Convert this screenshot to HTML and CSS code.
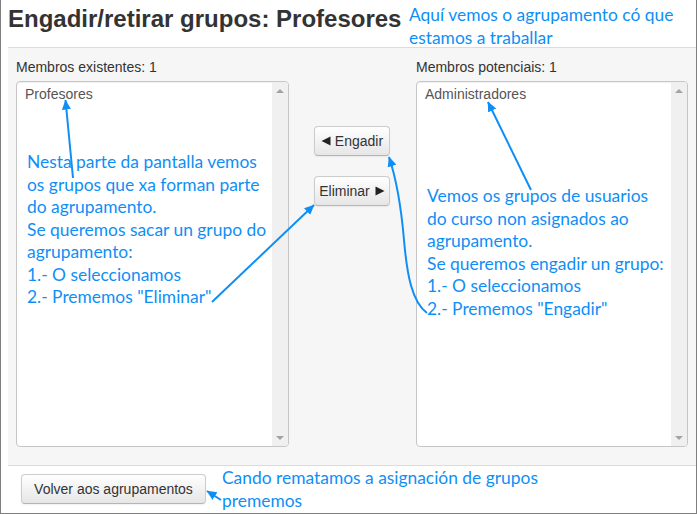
FILE: index.html
```html
<!DOCTYPE html>
<html>
<head>
<meta charset="utf-8">
<link rel="stylesheet" href="styles.css">
</head>
<body>
<div class="frame">
  <header class="head">
    <h2 class="title">Engadir/retirar grupos: Profesores</h2>
  </header>
  <div class="panel">
    <div class="col col-left">
      <div class="lbl">Membros existentes: 1</div>
      <div class="listbox">
        <div class="opts"><div class="opt">Profesores</div></div>
        <div class="sb"><span class="arr up"></span><span class="arr down"></span></div>
      </div>
    </div>
    <div class="mid">
      <button class="btn move"><svg class="tri tri-l" width="10" height="10" viewBox="0 0 10 10"><path d="M0.5,5 L9.5,0.5 L9.5,9.5 Z" fill="#222"/></svg>Engadir</button>
      <button class="btn move">Eliminar<svg class="tri tri-r" width="10" height="10" viewBox="0 0 10 10"><path d="M9.5,5 L0.5,0.5 L0.5,9.5 Z" fill="#222"/></svg></button>
    </div>
    <div class="col col-right">
      <div class="lbl">Membros potenciais: 1</div>
      <div class="listbox">
        <div class="opts"><div class="opt">Administradores</div></div>
        <div class="sb"><span class="arr up"></span><span class="arr down"></span></div>
      </div>
    </div>
  </div>
  <div class="foot">
    <button class="btn back">Volver aos agrupamentos</button>
  </div>

  <div class="note note-head">Aquí vemos o agrupamento có que<br>estamos a traballar</div>
  <div class="note note-left">Nesta parte da pantalla vemos<br>os grupos que xa forman parte<br>do agrupamento.<br>Se queremos sacar un grupo do<br>agrupamento:<br>1.- O seleccionamos<br>2.- Prememos "Eliminar"</div>
  <div class="note note-right">Vemos os grupos de usuarios<br>do curso non asignados ao<br>agrupamento.<br>Se queremos engadir un grupo:<br>1.- O seleccionamos<br>2.- Prememos "Engadir"</div>
  <div class="note note-foot">Cando rematamos a asignación de grupos<br>prememos</div>

  <svg class="arrows" width="697" height="514" viewBox="0 0 697 514">
    <defs>
      <marker id="ah" markerWidth="11" markerHeight="11" refX="9.5" refY="5.5" orient="auto" markerUnits="userSpaceOnUse">
        <path d="M0,1 L10,5.5 L0,10 Z" fill="#0f8ff6"/>
      </marker>
    </defs>
    <g fill="none" stroke="#0f8ff6" stroke-width="2" marker-end="url(#ah)">
      <path d="M73,178 L65.5,100"/>
      <path d="M212,302 L314,205"/>
      <path d="M531,190 L488,102"/>
      <path d="M427,313 C412,302 407,275 404,240 C401,205 396,178 389,157"/>
      <path d="M221,500 L207,491"/>
    </g>
  </svg>
</div>
</body>
</html>
```

FILE: styles.css
```css
* { box-sizing: border-box; }
html, body { margin: 0; padding: 0; background: #fff; }
body { font-family: "Liberation Sans", Arial, sans-serif; color: #333; }

.frame {
  position: relative;
  width: 697px;
  height: 514px;
  border: 1px solid #7f7f7f;
  border-top: none;
  overflow: hidden;
}

.head { padding: 5px 0 14px 7px; }
.title {
  margin: 0;
  font-size: 24px;
  line-height: 28px;
  font-weight: bold;
  color: #333;
}

.panel {
  margin-left: 7px;
  display: flex;
  padding: 10px 8px 18px 8px;
  background: #f6f6f6;
  border-top: 1px solid #dcdcdc;
  border-bottom: 1px solid #dcdcdc;
}
.col { display: flex; flex-direction: column; }
.col-left { width: 273px; }
.col-right { width: 272px; }
.lbl { font-size: 14px; line-height: 18px; margin-bottom: 5px; color: #333; }

.listbox {
  height: 366px;
  display: flex;
  background: #fff;
  border: 1px solid #c6c6c6;
  border-radius: 4px;
  box-shadow: inset 0 1px 1px rgba(0,0,0,0.06);
  overflow: hidden;
}
.opts { flex: 1; padding: 2px 8px; }
.opt { font-size: 14px; line-height: 20px; color: #555; }
.sb {
  width: 16px;
  background: #f0f0f0;
  display: flex;
  flex-direction: column;
  justify-content: space-between;
  align-items: center;
  padding: 7px 0 6px;
}
.arr { width: 0; height: 0; border-left: 4px solid transparent; border-right: 4px solid transparent; }
.arr.up { border-bottom: 4px solid #a3a3a3; }
.arr.down { border-top: 4px solid #a3a3a3; }

.mid {
  width: 127px;
  display: flex;
  flex-direction: column;
  padding-top: 68px;
  padding-left: 25px;
  align-items: flex-start;
  gap: 20px;
}

.btn {
  font-family: "Liberation Sans", Arial, sans-serif;
  font-size: 14px;
  line-height: 20px;
  height: 30px;
  color: #333;
  padding: 4px 12px;
  background: linear-gradient(#ffffff, #e6e6e6);
  border: 1px solid #cccccc;
  border-bottom-color: #b5b5b5;
  border-radius: 4px;
  box-shadow: inset 0 1px 0 rgba(255,255,255,0.2), 0 1px 2px rgba(0,0,0,0.06);
}
.btn.move {
  width: 76px;
  padding: 4px 0;
  display: flex;
  align-items: center;
  justify-content: center;
}
.tri { display: block; flex: none; }
.tri-l { margin-right: 4px; }
.tri-r { margin-left: 5px; }
.foot { padding: 8px 0 0 20px; }
.btn.back { width: 185px; padding: 4px 0; }

.note {
  position: absolute;
  font-family: Lato, "Open Sans", sans-serif;
  font-size: 17.4px;
  line-height: 22.5px;
  color: #0f8ff6;
  white-space: nowrap;
}
.note-head { left: 408px; top: 4px; }
.note-left { left: 26px; top: 151px; }
.note-right { left: 426px; top: 185px; }
.note-foot { left: 221px; top: 467px; }

.arrows { position: absolute; left: -1px; top: 0; pointer-events: none; }
```
